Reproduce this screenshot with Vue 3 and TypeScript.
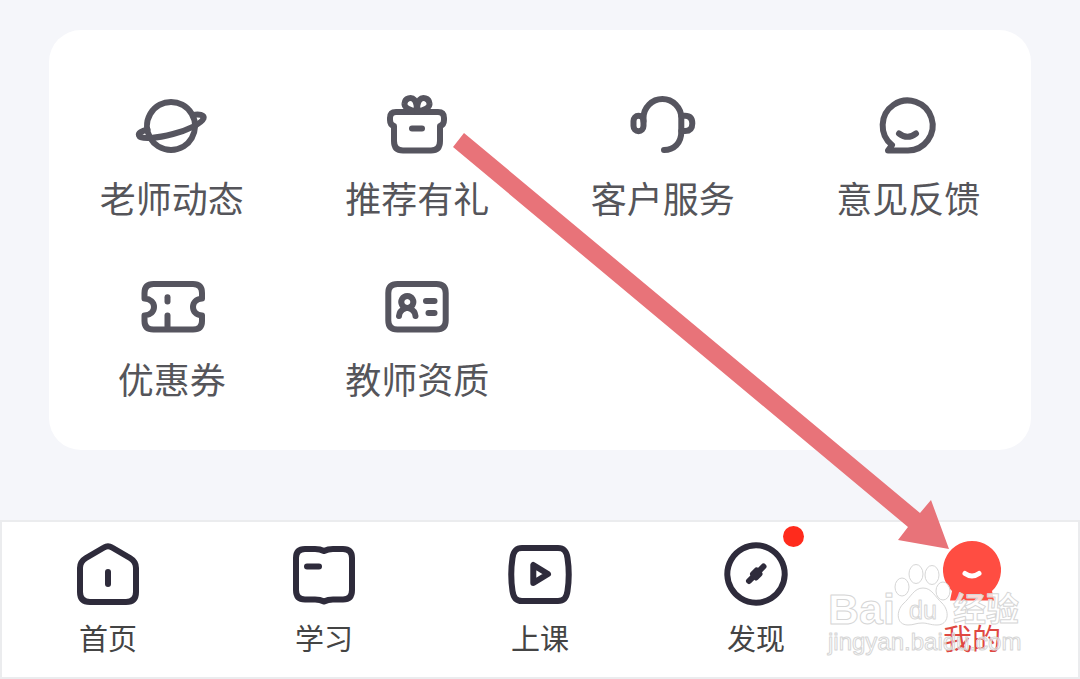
<script setup lang="ts">
interface Item {
  label: string
  paths: string[]
}

const services: Item[] = [
  {
    label: '老师动态',
    paths: [
      'M39 12 a24 24 0 1 0 0.01 0Z',
      'M61 25 C67 23.5 72.5 25 71.5 28.5 C69.5 33.5 55 40.5 41 44 C26 48 8.5 50 7 45.5 C6 43 10 41 15.5 39.5',
    ],
  },
  {
    label: '推荐有礼',
    paths: [
      'M17 36 Q13 35 13 30 V28 Q13 22 19 22 H61 Q67 22 67 28 V30 Q67 35 63 36 V51 Q63 60.5 54 60.5 H26 Q17 60.5 17 51Z',
      'M40 21 C32 21 27 17 27.5 13.5 C28 8 34.5 6.5 37.5 10 C39.5 12.5 40 16 40 21Z',
      'M40 21 C48 21 53 17 52.5 13.5 C52 8 45.5 6.5 42.5 10 C40.5 12.5 40 16 40 21Z',
      'M35 38.5 H45',
    ],
  },
  {
    label: '客户服务',
    paths: [
      'M10.5 31 A5 5.3 0 0 1 20.5 31 V36 A5 5.3 0 0 1 10.5 36Z',
      'M20.5 31 V28 A18.9 19 0 0 1 58.3 28 V42 C58.3 53 51 60 41 60',
      'M58.3 25.7 H62 Q69.3 25.7 69.3 33.4 Q69.3 41 62 41 H58.3',
    ],
  },
  {
    label: '意见反馈',
    paths: ['M24 55 A25 25 0 1 1 40 60.5 H20 L24 55', 'M31 43.5 Q39.5 50 48 43.5'],
  },
  {
    label: '优惠券',
    paths: [
      'M12.5 27.5 V22 Q12.5 13 21.5 13 H61 Q70 13 70 22 V27.5 C64 28 61 31.5 61 36 C61 40.5 64 44 70 44.5 V50 Q70 58.5 61 58.5 H21.5 Q12.5 58.5 12.5 50 V44.5 C18.5 44 22 40.5 22 36 C22 31.5 18.5 28 12.5 27.5Z',
      'M35.5 26.3 V30.5',
      'M35.5 44.5 V57',
    ],
  },
  {
    label: '教师资质',
    paths: [
      'M20.5 13 H59.5 Q68.7 13 68.7 22 V49.5 Q68.7 58.5 59.5 58.5 H20.5 Q11.3 58.5 11.3 49.5 V22 Q11.3 13 20.5 13Z',
      'M30.3 25 a6 6 0 1 0 0.01 0Z',
      'M22 45 Q22.5 39.5 28 37.5',
      'M38.5 45 Q38 39.5 32.5 37.5',
      'M49 30 H57.5',
      'M51.5 42 H57.5',
    ],
  },
]

const tabs: Item[] = [
  {
    label: '首页',
    paths: [
      'M36 9.5 Q40 7 44 9.5 L62 20 Q68 23.5 68 30 V54 Q68 64 58 64 H22 Q12 64 12 54 V30 Q12 23.5 18 20Z',
      'M40 34 V46',
    ],
  },
  {
    label: '学习',
    paths: [
      'M40 13 Q36 11 31 11 H21 Q12 11 12 20 V52 Q12 61.5 21 61.5 H31 Q36 61.5 40 63.5 Q44 61.5 49 61.5 H59 Q68 61.5 68 52 V20 Q68 11 59 11 H49 Q44 11 40 13Z',
      'M23 28.5 H35',
    ],
  },
  {
    label: '上课',
    paths: [
      'M22 10 H58 C64 10 66.5 13 67.5 20 Q70 36.5 67.5 53 C66.5 60 64 63 58 63 H22 C16 63 13.5 60 12.5 53 Q10 36.5 12.5 20 C13.5 13 16 10 22 10Z',
      'M33.3 27 V45 L48 36Z',
    ],
  },
  {
    label: '发现',
    paths: ['M40 7.3 a28.7 28.7 0 1 0 0.01 0Z', 'M33 43 L47.5 28.5', 'M37 36 L40.5 32.5 L43.5 36 L40 39.5Z'],
  },
]
</script>

<template>
  <div class="page">
    <main class="card">
      <button v-for="s in services" :key="s.label" type="button" class="tile">
        <svg class="icon" viewBox="0 0 80 70" aria-hidden="true">
          <path v-for="d in s.paths" :key="d" :d="d" />
        </svg>
        <span class="tile-label">{{ s.label }}</span>
      </button>
    </main>

    <nav class="tabbar">
      <a v-for="t in tabs" :key="t.label" href="#" class="tab">
        <span class="tab-icon">
          <svg class="icon" viewBox="0 0 80 70" aria-hidden="true">
            <path v-for="d in t.paths" :key="d" :d="d" />
          </svg>
          <i v-if="t.label === '发现'" class="dot"></i>
        </span>
        <span class="tab-label">{{ t.label }}</span>
      </a>
      <a href="#" class="tab active" aria-current="page">
        <svg class="icon solid" viewBox="0 0 80 70" aria-hidden="true">
          <path d="M40 3 A29 29 0 0 1 60 53 L62 62.5 H18 L20 53 A29 29 0 0 1 40 3Z" />
          <path class="smile" d="M33 35.5 Q40 40.5 47 35.5" />
        </svg>
        <span class="tab-label">我的</span>
      </a>
    </nav>

    <svg class="overlay" viewBox="0 0 1080 679" aria-hidden="true">
      <polygon class="arrow" points="453,147 464,133 920,513 931,500 949,549 898,540 908,527" />
      <g class="mark">
        <ellipse cx="902" cy="587" rx="7" ry="9" />
        <ellipse cx="916" cy="574" rx="7" ry="9.5" />
        <ellipse cx="932" cy="575" rx="7" ry="9.5" />
        <ellipse cx="943" cy="591" rx="7" ry="9" />
        <path d="M923 588 C932 588 935 597 942 603 C950 611 949 625 937 625 C930 625 928 623 922 623 C916 623 914 625 908 625 C896 625 896 611 903 604 C911 597 914 588 923 588Z" />
        <text class="brand" x="828" y="624">Bai</text>
        <text class="du" x="909" y="619">du</text>
        <text class="cn" x="953" y="621">经验</text>
        <text class="url" x="828" y="650">jingyan.baidu.com</text>
      </g>
    </svg>
  </div>
</template>

<style>
body {
  margin: 0;
  background: #f5f6fa;
}
</style>

<style scoped>
.page {
  position: relative;
  box-sizing: border-box;
  min-height: 100vh;
  padding-top: 30px;
  display: flex;
  flex-direction: column;
  justify-content: space-between;
  gap: 69px;
  background: #f5f6fa;
  font-family: "Liberation Sans", "Noto Sans CJK SC", sans-serif;
}

.card {
  margin: 0 49px;
  padding: 60px 0 43px;
  display: grid;
  grid-template-columns: repeat(4, 1fr);
  row-gap: 45px;
  background: #fff;
  border-radius: 32px;
}

.tile {
  display: flex;
  flex-direction: column;
  align-items: center;
  gap: 16px;
  padding: 0;
  border: 0;
  background: none;
  color: #55555a;
  font-family: inherit;
  cursor: pointer;
}

.icon {
  display: block;
  width: 80px;
  height: 70px;
  overflow: visible;
  fill: none;
  stroke: currentColor;
  stroke-width: 6;
  stroke-linecap: round;
  stroke-linejoin: round;
}

.tile .icon {
  color: #56555f;
}

.tile-label {
  font-size: 36px;
  line-height: 50px;
  white-space: nowrap;
}

.tabbar {
  display: flex;
  padding: 18px 0;
  background: #fff;
  box-shadow: inset 0 0 0 2px #ebecee;
}

.tab {
  flex: 1;
  display: flex;
  flex-direction: column;
  align-items: center;
  gap: 11px;
  color: #444;
  text-decoration: none;
}

.tab .icon {
  color: #2e2b3b;
}

.tab-icon {
  position: relative;
}

.dot {
  position: absolute;
  top: -12px;
  right: -8px;
  width: 21px;
  height: 21px;
  border-radius: 50%;
  background: #ff2b1c;
}

.tab-label {
  font-size: 29px;
  line-height: 42px;
}

.active {
  color: #df4842;
}

.tab .solid {
  color: #ff4d42;
  fill: currentColor;
  stroke: none;
}

.icon .smile {
  fill: none;
  stroke: #fff;
  stroke-width: 5;
}

.overlay {
  position: absolute;
  left: 0;
  bottom: 0;
  width: 100%;
  pointer-events: none;
}

.arrow {
  fill: #e87379;
}

.mark {
  fill: #fff;
  fill-opacity: 0.8;
  stroke: #d6d6d6;
  stroke-width: 1;
  stroke-linejoin: round;
}

.brand {
  font-size: 43px;
  font-weight: 700;
}

.du {
  font-size: 25px;
}

.cn {
  font-size: 33px;
  font-weight: 700;
}

.url {
  font-size: 24px;
  fill-opacity: 0.5;
}
</style>
